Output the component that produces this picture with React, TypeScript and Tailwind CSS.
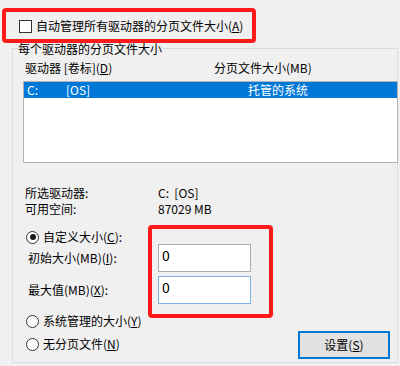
import React from "react";

function Radio({ checked }: { checked?: boolean }) {
  return (
    <span className="flex h-[13px] w-[13px] shrink-0 items-center justify-center rounded-full border border-[#333] bg-white">
      {checked && <span className="h-[6px] w-[6px] rounded-full bg-[#1a1a1a]" />}
    </span>
  );
}

function Mn({ c }: { c: string }) {
  return <span className="underline underline-offset-1">{c}</span>;
}

export default function App() {
  return (
    <div
      className="relative h-[366px] w-[400px] overflow-hidden bg-[#f0f0f0] text-[12px] leading-4 text-black"
      style={{ fontFamily: '"Noto Sans CJK SC", "Noto Sans", sans-serif' }}
    >
      {/* auto-manage checkbox */}
      <div className="mt-[18px] flex h-4 items-center pl-[19px]">
        <span className="h-[13px] w-[13px] shrink-0 border border-[#333] bg-white" />
        <span className="ml-[4px]">
          自动管理所有驱动器的分页文件大小(<Mn c="A" />)
        </span>
      </div>

      {/* group box */}
      <div className="relative ml-[12px] mt-[14px] h-[315px] w-[386px] border border-[#dcdcdc]">
        <span className="absolute -top-[8px] left-[5px] bg-[#f0f0f0] pr-px">每个驱动器的分页文件大小</span>

        <div className="mt-[11px] flex h-4 pl-[12px]">
          <span className="w-[189px]">
            驱动器 [卷标](<Mn c="D" />)
          </span>
          <span>分页文件大小(MB)</span>
        </div>

        <div className="ml-[10px] mt-[5px] h-[82px] w-[375px] border border-[#b4b4b4] bg-white">
          <div className="flex h-4 bg-[#0078d7] text-white">
            <span className="w-[42px] pl-[3px]">C:</span>
            <span className="w-[182px]">[OS]</span>
            <span>托管的系统</span>
          </div>
        </div>

        <div className="mt-[22px] grid grid-cols-[133px_1fr] pl-[12px]">
          <span>所选驱动器:</span>
          <span className="whitespace-pre">C:  [OS]</span>
          <span>可用空间:</span>
          <span>87029 MB</span>
        </div>

        <div className="mt-[13px] flex h-[14px] items-center pl-[13px]">
          <Radio checked />
          <span className="ml-[4px]">
            自定义大小(<Mn c="C" />):
          </span>
        </div>

        <div className="flex flex-col gap-[4px] pl-[15px]">
          <div className="flex h-[28px] items-center">
            <span className="w-[130px]">
              初始大小(MB)(<Mn c="I" />):
            </span>
            <div className="h-[28px] w-[93px] border border-[#adadad] bg-white pl-[3px] text-[14px] leading-5">
              0
            </div>
          </div>
          <div className="flex h-[28px] items-center">
            <span className="w-[130px]">
              最大值(MB)(<Mn c="X" />):
            </span>
            <div className="h-[28px] w-[93px] border border-[#7eb4ea] bg-white pl-[3px] text-[14px] leading-5">
              0
            </div>
          </div>
        </div>

        <div className="mt-[10px] flex items-start justify-between pl-[13px] pr-[7px]">
          <div className="flex flex-col gap-[9px]">
            <div className="flex h-[14px] items-center">
              <Radio />
              <span className="ml-[4px]">
                系统管理的大小(<Mn c="Y" />)
              </span>
            </div>
            <div className="flex h-[14px] items-center">
              <Radio />
              <span className="ml-[4px]">
                无分页文件(<Mn c="N" />)
              </span>
            </div>
          </div>
          <button
            type="button"
            className="mt-[17px] flex h-[28px] w-[92px] items-center justify-center border-2 border-[#0078d7] bg-[#e1e1e1]"
          >
            设置(<Mn c="S" />)
          </button>
        </div>
      </div>

      {/* red annotation boxes */}
      <div className="absolute left-[2px] top-[8px] h-[35px] w-[254px] rounded-[4px] border-4 border-[#ff1a1a]" />
      <div className="absolute left-[148px] top-[225px] h-[93px] w-[125px] rounded-[4px] border-4 border-[#ff1a1a]" />
    </div>
  );
}
